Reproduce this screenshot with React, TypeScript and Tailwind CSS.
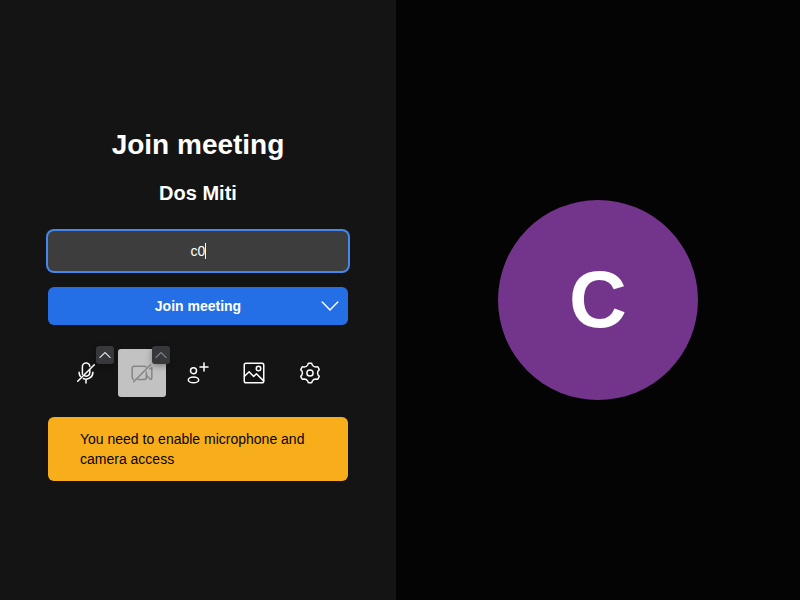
import React from 'react';

const iconProps = {
  width: 24,
  height: 24,
  viewBox: '0 0 24 24',
  fill: 'none',
  stroke: 'currentColor',
  strokeWidth: 1.5,
  strokeLinecap: 'round' as const,
  strokeLinejoin: 'round' as const,
};

function MicOffIcon() {
  return (
    <svg {...iconProps}>
      <path d="M8.4 13.2V6a3.7 3.7 0 0 1 7.4-.6M15.8 8.8v2.600a3.700 3.700 0 0 1-5.400 3.300" />
      <path d="M5.100 11.200c0 1.600.4 3 1.200 4.100M18.900 11.200a6.800 6.800 0 0 1-9.600 6.300M12 18.300v3.700" />
      <path d="M3.700 20.300 20.300 3.700" />
    </svg>
  );
}

function VideoOffIcon() {
  return (
    <svg {...iconProps}>
      <path d="M3.500 18.400a2.200 2.200 0 0 1-1.300-2.100V7.300c0-1.300.9-2.100 2.100-2.100h10c.8 0 1.400.3 1.800.8M16.400 11v5.300c0 1.300-.9 2.100-2.100 2.100H8" />
      <path d="m16.400 14.200 3.600 3.700c.7.7 1.800.3 1.800-.7V6.500l-2 1.500" />
      <path d="M3.600 20.800 20.600 3.800" />
    </svg>
  );
}

function InviteIcon() {
  return (
    <svg {...iconProps}>
      <circle cx="7.500" cy="9.700" r="3" />
      <ellipse cx="7.500" cy="18.900" rx="5.200" ry="2.900" />
      <path d="M18 2v8M14 6h8" />
    </svg>
  );
}

function ImageIcon() {
  return (
    <svg {...iconProps}>
      <rect x="2.250" y="2.250" width="19.500" height="19.500" rx="1.800" />
      <circle cx="16.500" cy="7.500" r="2.250" />
      <path d="m2.500 15.300 4.600-4.600 4.600 4.700 2.700-2.700 7.200 7.200" />
    </svg>
  );
}

function GearIcon() {
  return (
    <svg {...iconProps}>
      <circle cx="12" cy="12" r="3.100" />
      <path d="M10.900 2.200H13.100Q13.800 2.200 13.950 2.850L14.300 4C15 5.250 16.350 6 17.800 6L18.950 5.700Q19.600 5.500 19.950 6.100L21.050 8.050Q21.400 8.650 20.950 9.100L20.050 10C19.400 11.200 19.400 12.800 20.050 14L20.950 14.900Q21.400 15.350 21.050 15.950L19.950 17.900Q19.600 18.500 18.950 18.300L17.800 18C16.350 18 15 18.750 14.300 20L13.950 21.150Q13.800 21.800 13.100 21.800H10.900Q10.200 21.800 10.050 21.150L9.700 20C9 18.750 7.650 18 6.200 18L5.050 18.300Q4.400 18.500 4.050 17.900L2.950 15.950Q2.600 15.350 3.050 14.900L3.950 14C4.600 12.800 4.600 11.200 3.950 10L3.050 9.100Q2.600 8.650 2.950 8.050L4.050 6.100Q4.400 5.500 5.050 5.700L6.200 6C7.650 6 9 5.250 9.700 4L10.050 2.850Q10.200 2.200 10.900 2.200Z" />
    </svg>
  );
}

function ArrowButton({ muted = false }: { muted?: boolean }) {
  return (
    <button
      aria-label="Options"
      className={`absolute -top-[3px] -right-1 flex size-[18px] items-center justify-center rounded-[3px] bg-[#36383c] shadow-[0_2px_6px_rgba(0,0,0,0.35)] ${muted ? 'text-[#858585]' : 'text-[#e6e6e6]'}`}
    >
      <svg width="12" height="12" viewBox="0 0 12 12" fill="none" stroke="currentColor" strokeWidth="1.1">
        <path d="m.5 8.900 5.500-5.400 5.500 5.400" />
      </svg>
    </button>
  );
}

export default function App() {
  return (
    <div className="flex h-[600px] w-[800px] overflow-hidden bg-[#040404] font-['Liberation_Sans',Arial,sans-serif] text-white">
      <main className="flex w-[396px] flex-col bg-[#141414] px-12 pt-[127px]">
        <h1 className="text-center text-[28px] leading-9 font-bold">Join meeting</h1>
        <h2 className="mt-4 text-center text-xl leading-7 font-bold">Dos Miti</h2>
        <div className="mt-6 flex h-10 items-center justify-center rounded-md bg-[#3d3d3d] text-sm shadow-[0_0_0_2px_#4687ed]">
          <span>c0</span>
          <span className="-mr-px h-4 w-px bg-white" />
        </div>
        <div className="mt-4 flex h-[38px] items-center rounded-md bg-[#246fe5] text-sm font-bold">
          <button className="flex-1 pl-9 text-center leading-5">Join meeting</button>
          <button aria-label="Join options" className="flex w-9 justify-center">
            <svg width="24" height="24" viewBox="0 0 24 24" fill="none" stroke="currentColor" strokeWidth="1.5" strokeLinecap="round">
              <path d="m4.200 8 7.800 8 7.800-8" />
            </svg>
          </button>
        </div>
        <div className="mt-6 flex justify-center gap-2">
          <div className="relative flex size-12 items-center justify-center"><MicOffIcon /><ArrowButton /></div>
          <div className="relative flex size-12 items-center justify-center rounded-[3px] bg-[#c2c2c2] text-[#858585]"><VideoOffIcon /><ArrowButton muted /></div>
          <div className="flex size-12 items-center justify-center"><InviteIcon /></div>
          <div className="flex size-12 items-center justify-center"><ImageIcon /></div>
          <div className="flex size-12 items-center justify-center"><GearIcon /></div>
        </div>
        <div className="mt-5 rounded-md bg-[#f8ae1a] px-8 py-3 text-sm leading-5 text-[#040404]">
          You need to enable microphone and camera access
        </div>
      </main>
      <section className="flex flex-1 items-center justify-center">
        <div className="flex size-[200px] items-center justify-center rounded-full bg-[#73348c] text-[80px] leading-none font-bold">C</div>
      </section>
    </div>
  );
}
